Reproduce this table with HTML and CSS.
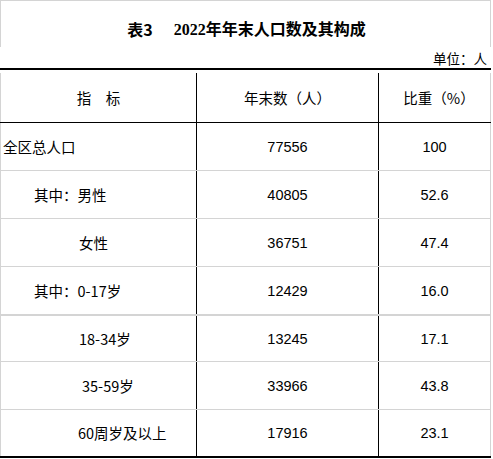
FILE: index.html
```html
<!DOCTYPE html>
<html lang="zh-CN">
<head>
<meta charset="utf-8">
<title>表3 2022年年末人口数及其构成</title>
<link rel="stylesheet" href="styles.css">
</head>
<body>
<div class="sheet">
  <div class="title"><span class="t-no">表3</span><span class="t-text"><span class="num">2022</span>年年末人口数及其构成</span></div>
  <div class="unit">单位：人</div>
  <div class="table">
    <div class="row head">
      <div class="cell c1 center">指　标</div>
      <div class="cell c2 center">年末数（人）</div>
      <div class="cell c3 center pct-head">比重（%）</div>
    </div>
    <div class="row">
      <div class="cell c1 l0">全区总人口</div>
      <div class="cell c2 num center">77556</div>
      <div class="cell c3 num center">100</div>
    </div>
    <div class="row">
      <div class="cell c1 l1">其中：男性</div>
      <div class="cell c2 num center">40805</div>
      <div class="cell c3 num center">52.6</div>
    </div>
    <div class="row">
      <div class="cell c1 l2">女性</div>
      <div class="cell c2 num center">36751</div>
      <div class="cell c3 num center">47.4</div>
    </div>
    <div class="row thick">
      <div class="cell c1 l1">其中：0-17岁</div>
      <div class="cell c2 num center">12429</div>
      <div class="cell c3 num center">16.0</div>
    </div>
    <div class="row short">
      <div class="cell c1 l2">18-34岁</div>
      <div class="cell c2 num center">13245</div>
      <div class="cell c3 num center">17.1</div>
    </div>
    <div class="row">
      <div class="cell c1 l3">35-59岁</div>
      <div class="cell c2 num center">33966</div>
      <div class="cell c3 num center">43.8</div>
    </div>
    <div class="row last">
      <div class="cell c1 l4">60周岁及以上</div>
      <div class="cell c2 num center">17916</div>
      <div class="cell c3 num center">23.1</div>
    </div>
  </div>
</div>
</body>
</html>
```

FILE: styles.css
```css
html, body {
  margin: 0;
  padding: 0;
  background: #fff;
}
body {
  font-family: "Noto Sans CJK SC", "Liberation Sans", sans-serif;
  color: #000;
}
.sheet {
  width: 491px;
}
.title {
  box-sizing: border-box;
  height: 47px;
  border-top: 1px solid #d4d4d4;
  border-left: 1px solid #d4d4d4;
  border-right: 1px solid #d4d4d4;
  display: flex;
  justify-content: center;
  align-items: center;
  gap: 21px;
  padding-top: 10px;
  padding-left: 2px;
  font-family: "Liberation Serif", "Noto Sans CJK SC", serif;
  font-weight: bold;
  font-size: 16px;
  line-height: 16px;
}
.title .t-no,
.title .t-text {
  font-family: "Noto Sans CJK SC", sans-serif;
}
.title .num {
  font-family: "Liberation Serif", serif;
  font-weight: bold;
  font-size: 16px;
}
.unit {
  box-sizing: border-box;
  height: 21px;
  display: flex;
  justify-content: flex-end;
  align-items: flex-end;
  padding-right: 4px;
  padding-bottom: 3px;
  font-size: 13.5px;
  line-height: 14px;
}
.table {
  border-top: 2px solid #000;
  border-bottom: 2px solid #000;
}
.row {
  box-sizing: border-box;
  display: grid;
  grid-template-columns: 196px 182px 113px;
  height: 48px;
  border-bottom: 1px solid #d4d4d4;
}
.row.head {
  height: 53px;
  border-bottom: 1px solid #000;
  padding-top: 3px;
}
.row.thick {
  height: 49px;
  border-bottom: 2px solid #d4d4d4;
}
.row.short {
  height: 46px;
}
.row.last {
  height: 46px;
  border-bottom: none;
}
.cell {
  box-sizing: border-box;
  display: flex;
  align-items: center;
  font-size: 14.5px;
  line-height: 16px;
  white-space: pre;
}
.c1 {
  border-left: 1px solid #d4d4d4;
}
.c2 {
  border-left: 1px solid #000;
}
.c3 {
  border-left: 1px solid #000;
  border-right: 1px solid #d4d4d4;
}
.center {
  justify-content: center;
}
.pct-head {
  padding-left: 9px;
}
.cell.num {
  font-family: "Liberation Sans", sans-serif;
  font-size: 14.5px;
}
.l0 { padding-left: 2px; }
.l1 { padding-left: 33px; }
.l2 { padding-left: 78px; }
.l3 { padding-left: 81px; }
.l4 { padding-left: 77px; }
```
